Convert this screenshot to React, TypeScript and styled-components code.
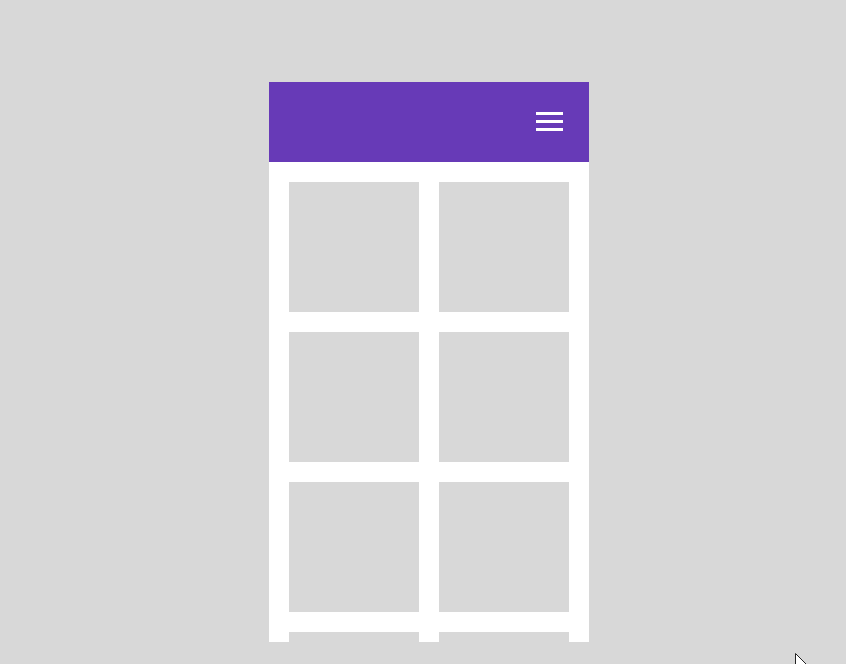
import React from "react";
import styled, { createGlobalStyle } from "styled-components";

const GlobalStyle = createGlobalStyle`
  html, body {
    margin: 0;
    padding: 0;
    background: #d8d8d8;
    font-family: "Roboto", "Liberation Sans", sans-serif;
  }
`;

const Page = styled.div`
  position: relative;
  width: 846px;
  height: 664px;
  overflow: hidden;
  padding: 82px 0 0 269px;
  box-sizing: border-box;
`;

const Phone = styled.div`
  display: flex;
  flex-direction: column;
  width: 320px;
  height: 560px;
  background: #ffffff;
  overflow: hidden;
`;

const Header = styled.header`
  display: flex;
  align-items: flex-start;
  justify-content: flex-end;
  height: 80px;
  box-sizing: border-box;
  flex-shrink: 0;
  padding: 30px 26px 0;
  background: #673ab7;
`;

const MenuButton = styled.button`
  display: flex;
  flex-direction: column;
  justify-content: space-between;
  width: 27px;
  height: 19px;
  padding: 0;
  border: none;
  background: transparent;
  cursor: pointer;
`;

const MenuLine = styled.span`
  display: block;
  height: 3px;
  background: #ffffff;
`;

const Grid = styled.div`
  display: grid;
  grid-template-columns: repeat(2, 130px);
  grid-auto-rows: 130px;
  gap: 20px;
  padding: 20px;
`;

const Tile = styled.div`
  background: #d8d8d8;
`;

const Cursor = styled.svg`
  position: absolute;
  left: 795px;
  top: 653px;
`;

const App: React.FC = () => {
  const tiles = Array.from({ length: 8 });

  return (
    <>
      <GlobalStyle />
      <Page>
        <Phone>
          <Header>
            <MenuButton aria-label="Menu">
              <MenuLine />
              <MenuLine />
              <MenuLine />
            </MenuButton>
          </Header>
          <Grid>
            {tiles.map((_, index) => (
              <Tile key={index} />
            ))}
          </Grid>
        </Phone>
        <Cursor width="14" height="20" viewBox="0 0 14 20">
          <path d="M0.5 0.5 L0.5 16 L4 12.5 L6.5 18.5 L9 17.5 L6.5 11.5 L11.5 11.5 Z" fill="#ffffff" stroke="#222" strokeWidth="1" />
        </Cursor>
      </Page>
    </>
  );
};

export default App;
